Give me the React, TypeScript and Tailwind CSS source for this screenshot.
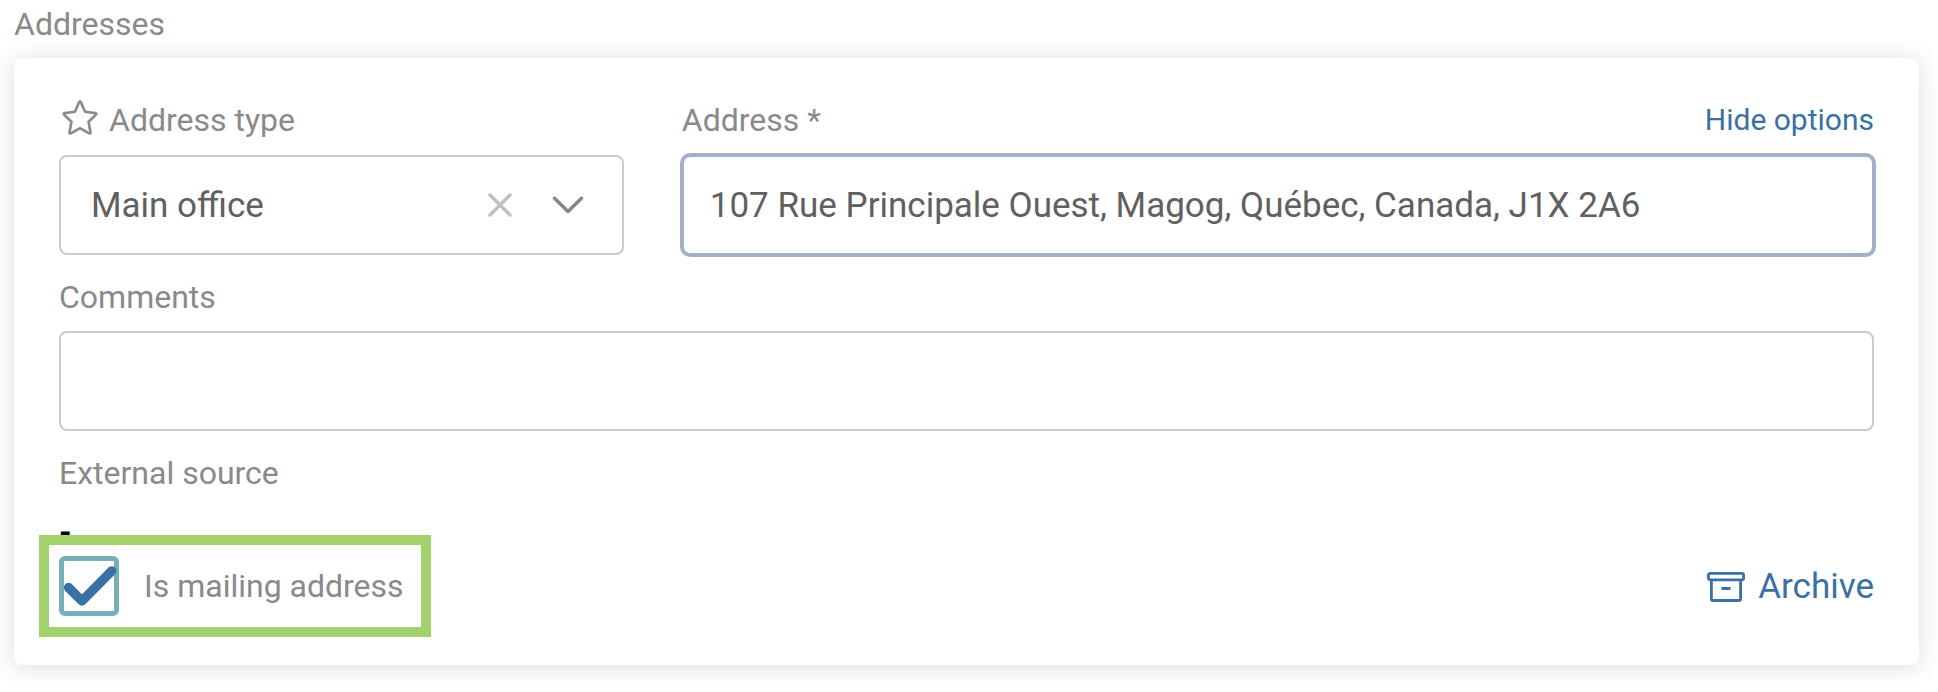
import { useState } from 'react'
import type { ReactNode } from 'react'

type FieldLabelProps = {
  htmlFor: string
  children: ReactNode
}

function FieldLabel({ htmlFor, children }: FieldLabelProps) {
  return (
    <label htmlFor={htmlFor} className="text-[32px] leading-10 text-[#8a8a8a]">
      {children}
    </label>
  )
}

function StarIcon() {
  return (
    <svg
      viewBox="0 0 36 36"
      className="size-9"
      fill="none"
      stroke="currentColor"
      strokeWidth="2.6"
      strokeLinejoin="round"
      aria-hidden="true"
    >
      <path d="M17.1 2.4q.9-1.6 1.8 0l4.2 9.4 10.2 1.3q1.6.4.6 1.6l-7.4 7 2 10.6q.1 1.7-1.4 1.1L18 28.2l-9.1 5.2q-1.5.6-1.4-1.1l2-10.6-7.4-7q-1-1.2.6-1.6l10.2-1.3z" />
    </svg>
  )
}

function ArchiveIcon() {
  return (
    <svg
      viewBox="0 0 38 30"
      className="h-[30px] w-[38px]"
      fill="none"
      stroke="currentColor"
      strokeWidth="2.8"
      aria-hidden="true"
    >
      <rect x="1.4" y="1.4" width="35.2" height="6.4" rx="1.8" />
      <path d="M4.4 7.8v18.900q0 1.800 1.800 1.800h25.600q1.800 0 1.800-1.800V7.800M14.500 16.500h9" />
    </svg>
  )
}

export default function App() {
  const [addressType, setAddressType] = useState('main')
  const [address, setAddress] = useState('107 Rue Principale Ouest, Magog, Québec, Canada, J1X 2A6')
  const [comments, setComments] = useState('')
  const [mailing, setMailing] = useState(true)

  return (
    <main className="bg-white pt-1 pr-[19px] pb-[27px] pl-[14px] font-['Roboto',sans-serif]">
      <h2 className="mb-[14px] text-[32px] leading-10 text-[#8a8a8a]">Addresses</h2>

      <section className="rounded-lg bg-white px-[45px] pt-[42px] pb-7 shadow-[0_2px_24px_rgba(0,0,0,0.14)]">
        <div className="grid grid-cols-[9fr_19fr] gap-[58px]">
          <div>
            <div className="mb-[15px] flex items-start gap-[11px] pl-[3px] text-[#8a8a8a]">
              <StarIcon />
              <FieldLabel htmlFor="address-type">Address type</FieldLabel>
            </div>
            <div className="relative">
              <select
                id="address-type"
                value={addressType}
                onChange={(e) => setAddressType(e.target.value)}
                className="block h-[100px] w-full appearance-none rounded-lg border-2 border-[#cbcbcb] bg-white px-[30px] pt-0.5 text-[35px] text-[#606060]"
              >
                <option value=""></option>
                <option value="main">Main office</option>
              </select>
              <div className="pointer-events-none absolute inset-y-0 right-10 flex items-center gap-10">
                <button
                  type="button"
                  aria-label="Clear address type"
                  onClick={() => setAddressType('')}
                  className="pointer-events-auto text-[#c0c0c0]"
                >
                  <svg viewBox="0 0 24 24" className="size-6" fill="none" stroke="currentColor" strokeWidth="3.4" strokeLinecap="round">
                    <path d="M2 2l20 20M22 2L2 22" />
                  </svg>
                </button>
                <svg
                  viewBox="0 0 32 18"
                  className="h-[18px] w-8 text-[#858585]"
                  fill="none"
                  stroke="currentColor"
                  strokeWidth="3.4"
                  strokeLinecap="round"
                  strokeLinejoin="round"
                  aria-hidden="true"
                >
                  <path d="M2.500 2.300L16 15.500 29.500 2.300" />
                </svg>
              </div>
            </div>
          </div>

          <div>
            <div className="mb-[15px] flex items-center justify-between">
              <FieldLabel htmlFor="address">Address *</FieldLabel>
              <a href="#options" className="text-[30px] leading-10 text-[#3a70a4]">
                Hide options
              </a>
            </div>
            <input
              id="address"
              type="text"
              value={address}
              onChange={(e) => setAddress(e.target.value)}
              className="block h-[100px] w-full rounded-lg border-2 border-[#a2b1c9] bg-white px-[26px] text-[35px] text-[#606060] ring-2 ring-[#a2b1c9] outline-none"
            />
          </div>
        </div>

        <div className="mt-[22px] flex flex-col gap-[14px]">
          <FieldLabel htmlFor="comments">Comments</FieldLabel>
          <input
            id="comments"
            type="text"
            value={comments}
            onChange={(e) => setComments(e.target.value)}
            className="block h-[100px] w-full rounded-lg border-2 border-[#cbcbcb] bg-white px-[31px] text-[35px] text-[#606060] outline-none"
          />
        </div>

        <dl className="mt-[22px] text-[32px] leading-10">
          <dt className="text-[#8a8a8a]">External source</dt>
          <dd className="mt-[19px] font-bold text-black">-</dd>
        </dl>

        {/* the highlight frame overlaps the lower half of the value above */}
        <div className="relative -mt-[17px] -ml-5 flex items-center justify-between">
          <label className="flex h-[102px] items-center gap-[25px] border-10 border-[#a2d16d] bg-white pr-[17px] pl-[10px]">
            <span className="relative size-[60px]">
              <input
                type="checkbox"
                checked={mailing}
                onChange={(e) => setMailing(e.target.checked)}
                className="block size-[60px] appearance-none rounded-md border-[5px] border-[#76afba] bg-white"
              />
              {mailing ? (
                <svg
                  viewBox="0 0 60 60"
                  className="pointer-events-none absolute inset-0 size-[60px]"
                  fill="none"
                  stroke="#3a70a4"
                  strokeWidth="9.5"
                  strokeLinecap="round"
                  strokeLinejoin="round"
                  aria-hidden="true"
                >
                  <path d="M9.600 31.600L23 45 52.600 15" />
                </svg>
              ) : null}
            </span>
            <span className="text-[32px] leading-10 text-[#8a8a8a]">Is mailing address</span>
          </label>
          <button type="button" className="flex items-center gap-[13px] pt-0.5 text-[35px] leading-10 text-[#3a70a4]">
            <ArchiveIcon />
            Archive
          </button>
        </div>
      </section>
    </main>
  )
}
